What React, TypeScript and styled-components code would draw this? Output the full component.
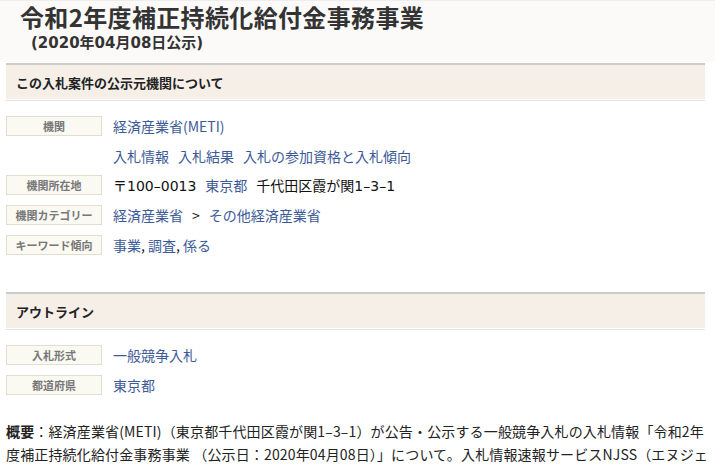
import React from 'react';
import styled, { createGlobalStyle } from 'styled-components';

const GlobalStyle = createGlobalStyle`
    body {
        margin: 0;
        background: #ffffff;
        font-family: "Noto Sans CJK JP", "Noto Sans", sans-serif;
        color: #222;
    }
`;

const Page = styled.div`
    width: 715px;
    overflow: hidden;
`;

const TitleBlock = styled.div`
    height: 62px;
    box-sizing: border-box;
    background: #fbfaf8;
    border-top: 1px solid #eeeeee;
    padding: 0 0 0 20px;
`;

const Title = styled.h1`
    margin: 0;
    font-size: 24px;
    line-height: 32px;
    font-weight: bold;
    color: #333;
    letter-spacing: 0.35px;
`;

const SubTitle = styled.div`
    margin: 0 0 0 11px;
    font-family: "DejaVu Sans", "Noto Sans CJK JP", sans-serif;
    font-size: 15px;
    line-height: 20px;
    font-weight: bold;
    color: #333;
`;

const Section = styled.section<{ gap?: number }>`
    margin: ${(p) => p.gap || 0}px 10px 0 6px;
`;

const SectionHeader = styled.h2`
    margin: 1px 0 0 0;
    height: 34px;
    display: flex;
    align-items: center;
    padding-left: 10px;
    font-size: 13px;
    font-weight: bold;
    color: #222;
    background: #f5efe8;
    border-top: 2px solid #cbcbcb;
    border-bottom: 1px solid #ffffff;
    box-shadow: 0 1px 0 #e2e2e2;
`;

const Rows = styled.div`
    padding-top: 16px;
    display: flex;
    flex-direction: column;
`;

const Row = styled.div<{ space?: number }>`
    display: flex;
    align-items: center;
    height: 20px;
    margin-bottom: ${(p) => (p.space === undefined ? 10 : p.space)}px;
`;

const Label = styled.div`
    width: 96px;
    height: 20px;
    box-sizing: border-box;
    flex-shrink: 0;
    display: flex;
    align-items: center;
    justify-content: center;
    background: #faf9f2;
    border: 1px solid #e2decf;
    font-size: 11px;
    font-weight: bold;
    color: #777;
`;

const Value = styled.div<{ indent?: boolean; tight?: boolean }>`
    margin-left: ${(p) => (p.indent ? 107 : 11)}px;
    font-size: 14px;
    color: #111;
    white-space: nowrap;
    display: flex;
    gap: ${(p) => (p.tight ? 0 : 9)}px;
`;

const Address = styled.span`
    font-family: "DejaVu Sans", "Noto Sans CJK JP", sans-serif;
    font-size: 14px;
`;

const A = styled.a`
    color: #3d5a98;
    text-decoration: none;
`;

const Summary = styled.p`
    margin: 25px 6px 0 6px;
    font-size: 14px;
    line-height: 23px;
    color: #222;
    letter-spacing: 0.15px;
`;

const Strong = styled.b`
    font-weight: bold;
`;

export default function App() {
    return (
        <Page>
            <GlobalStyle />
            <TitleBlock>
                <Title>令和2年度補正持続化給付金事務事業</Title>
                <SubTitle>(2020年04月08日公示)</SubTitle>
            </TitleBlock>

            <Section>
                <SectionHeader>この入札案件の公示元機関について</SectionHeader>
                <Rows>
                    <Row>
                        <Label>機関</Label>
                        <Value>
                            <A href="#">経済産業省(METI)</A>
                        </Value>
                    </Row>
                    <Row space={9}>
                        <Value indent>
                            <A href="#">入札情報</A>
                            <A href="#">入札結果</A>
                            <A href="#">入札の参加資格と入札傾向</A>
                        </Value>
                    </Row>
                    <Row>
                        <Label>機関所在地</Label>
                        <Value>
                            <Address>〒100–0013</Address>
                            <A href="#">東京都</A>
                            <Address>千代田区霞が関1–3–1</Address>
                        </Value>
                    </Row>
                    <Row>
                        <Label>機関カテゴリー</Label>
                        <Value>
                            <A href="#">経済産業省</A>
                            <span>&gt;</span>
                            <A href="#">その他経済産業省</A>
                        </Value>
                    </Row>
                    <Row space={0}>
                        <Label>キーワード傾向</Label>
                        <Value tight>
                            <A href="#">事業</A>,&nbsp;<A href="#">調査</A>,&nbsp;<A href="#">係る</A>
                        </Value>
                    </Row>
                </Rows>
            </Section>

            <Section gap={37}>
                <SectionHeader>アウトライン</SectionHeader>
                <Rows>
                    <Row>
                        <Label>入札形式</Label>
                        <Value>
                            <A href="#">一般競争入札</A>
                        </Value>
                    </Row>
                    <Row space={0}>
                        <Label>都道府県</Label>
                        <Value>
                            <A href="#">東京都</A>
                        </Value>
                    </Row>
                </Rows>
            </Section>

            <Summary>
                <Strong>概要</Strong>：経済産業省(METI)（東京都千代田区霞が関1–3–1）が公告・公示する一般競争入札の入札情報「令和2年度補正持続化給付金事務事業
                （公示日：2020年04月08日）」について。入札情報速報サービスNJSS（エヌジェイエスエス）では、この案件の詳細情報や関連する落札結果をご確認いただけます。
            </Summary>
        </Page>
    );
}
